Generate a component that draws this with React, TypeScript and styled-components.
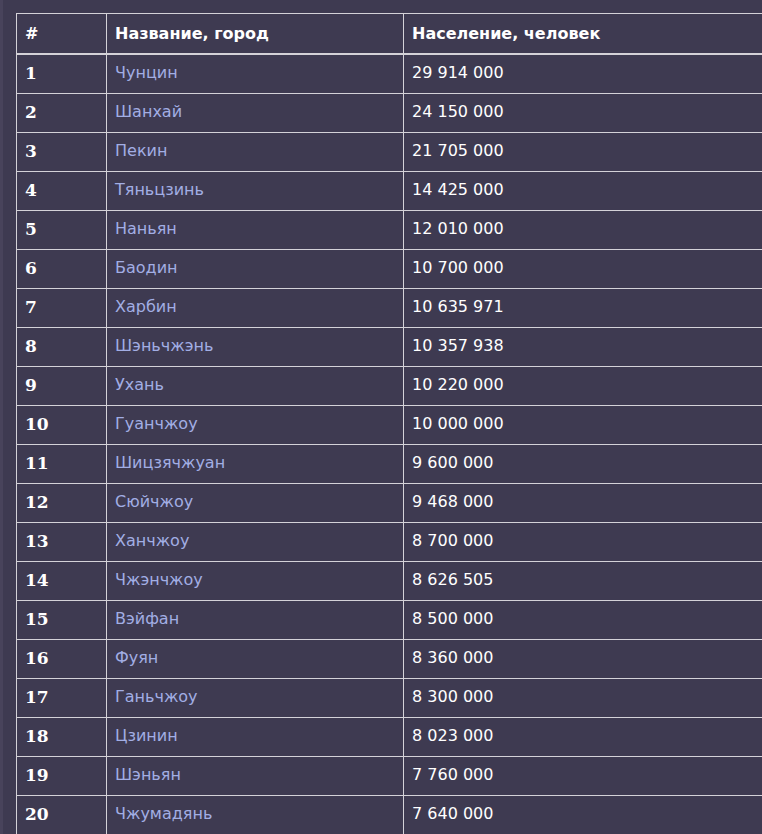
import React from 'react'
import styled, { createGlobalStyle } from 'styled-components'

const GlobalStyle = createGlobalStyle`
  html, body {
    margin: 0;
    padding: 0;
    background-color: #3e3a51;
  }
  body {
    overflow: hidden;
  }
`

const cities = [
  { name: 'Чунцин', population: '29 914 000' },
  { name: 'Шанхай', population: '24 150 000' },
  { name: 'Пекин', population: '21 705 000' },
  { name: 'Тяньцзинь', population: '14 425 000' },
  { name: 'Наньян', population: '12 010 000' },
  { name: 'Баодин', population: '10 700 000' },
  { name: 'Харбин', population: '10 635 971' },
  { name: 'Шэньчжэнь', population: '10 357 938' },
  { name: 'Ухань', population: '10 220 000' },
  { name: 'Гуанчжоу', population: '10 000 000' },
  { name: 'Шицзячжуан', population: '9 600 000' },
  { name: 'Сюйчжоу', population: '9 468 000' },
  { name: 'Ханчжоу', population: '8 700 000' },
  { name: 'Чжэнчжоу', population: '8 626 505' },
  { name: 'Вэйфан', population: '8 500 000' },
  { name: 'Фуян', population: '8 360 000' },
  { name: 'Ганьчжоу', population: '8 300 000' },
  { name: 'Цзинин', population: '8 023 000' },
  { name: 'Шэньян', population: '7 760 000' },
  { name: 'Чжумадянь', population: '7 640 000' },
]

export default function App() {
  return (
    <Page>
      <GlobalStyle />
      <CityTable>
        <colgroup>
          <col style={{ width: 90 }} />
          <col style={{ width: 297 }} />
          <col style={{ width: 420 }} />
        </colgroup>
        <thead>
          <tr>
            <HeadCell>#</HeadCell>
            <HeadCell>Название, город</HeadCell>
            <HeadCell>Население, человек</HeadCell>
          </tr>
        </thead>
        <tbody>
          {cities.map((city, i) => (
            <tr key={city.name}>
              <RankCell>{i + 1}</RankCell>
              <Cell>
                <CityLink href="#">{city.name}</CityLink>
              </Cell>
              <Cell>{city.population}</Cell>
            </tr>
          ))}
        </tbody>
      </CityTable>
    </Page>
  )
}

const Page = styled.div`
  min-height: 834px;
  border-left: 3px solid #48435b;
  padding: 13px 0 0 13px;
  box-sizing: border-box;
  overflow: hidden;
`

const CityTable = styled.table`
  border-collapse: collapse;
  table-layout: fixed;
  width: 807px;
  color: #ffffff;
  font-family: 'DejaVu Sans', Verdana, sans-serif;
  font-size: 16px;
`

const HeadCell = styled.th`
  border: 1px solid #d4d2d8;
  border-bottom-width: 2px;
  padding: 0 8px;
  height: 38.5px;
  text-align: left;
  font-weight: bold;
  font-family: 'DejaVu Sans', Verdana, sans-serif;
`

const Cell = styled.td`
  border: 1px solid #d4d2d8;
  padding: 0 8px 1px;
  height: 37px;
  line-height: 20px;
  text-align: left;
  vertical-align: middle;
`

const RankCell = styled.th`
  border: 1px solid #d4d2d8;
  padding: 0 8px 1px;
  height: 37px;
  line-height: 20px;
  text-align: left;
  font-weight: bold;
  font-size: 17px;
  font-family: 'DejaVu Serif', 'Liberation Serif', serif;
`

const CityLink = styled.a`
  color: #a2aee4;
  text-decoration: none;
`
